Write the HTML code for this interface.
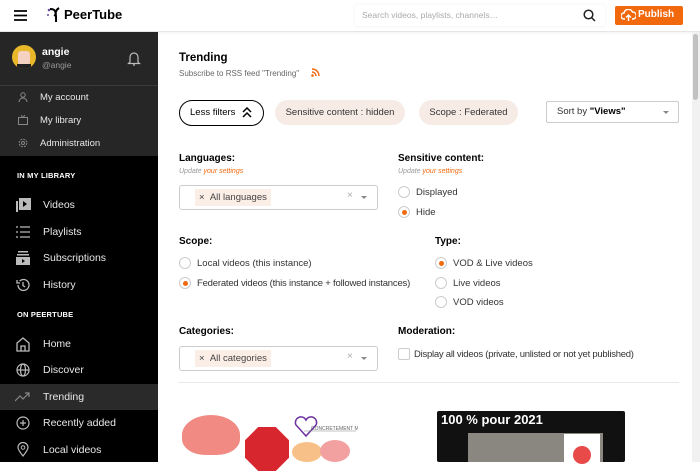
<!DOCTYPE html>
<html><head><meta charset="utf-8"><style>
*{box-sizing:border-box;margin:0;padding:0}
body{width:700px;height:462px;overflow:hidden;font-family:"Liberation Sans",sans-serif;background:#fff;position:relative;color:#000}
.a{position:absolute;white-space:nowrap}
.hdr{left:0;top:0;width:700px;height:32px;background:#fff;border-bottom:1px solid #e6e6e6;box-shadow:0 1px 3px rgba(0,0,0,.06)}
.side{left:0;top:32px;width:158px;height:430px;background:#000}
.top{left:0;top:32px;width:158px;height:124px;background:#262626}
.sm{font-size:9.5px;color:#e8e8e8}
.si{font-size:10.5px;color:#e8e8e8}
.sec{font-size:7.5px;font-weight:bold;color:#fff;letter-spacing:.2px}
.lbl{font-size:10px;font-weight:bold}
.upd{font-size:7px;font-style:italic;color:#999}
.upd span{color:#f1680d}
.opt{font-size:9.5px;color:#333}
.rad{width:12px;height:12px;border:1px solid #ccc;border-radius:50%;background:#fff}
.rad.on::after{content:"";position:absolute;left:2.5px;top:2.5px;width:5px;height:5px;border-radius:50%;background:#f1680d}
.sel{width:199px;height:25px;border:1px solid #ccc;border-radius:3px;background:#fff}
.tag{background:#fbeee6;font-size:9.5px;color:#444;height:17px;line-height:17px;padding:0 4px}
.pill{height:25px;border-radius:13px;background:#f6ebe5;font-size:9.5px;color:#333;line-height:25px;text-align:center}
</style></head><body>
<div class="a hdr"></div>
<svg class="a" style="left:14px;top:10px" width="13" height="11"><path d="M0 1h13M0 5.5h13M0 10h13" stroke="#000" stroke-width="1.8"/></svg>
<svg class="a" style="left:46px;top:7px" width="16" height="16"><circle cx="3" cy="3" r="1.3" fill="#6b4ba0"/><circle cx="2" cy="8" r="1" fill="#6b4ba0"/><path d="M4 2c4 0 5 1 6 5M13 1c-3 2-4 5-3 8v6M8 8l2 1" stroke="#000" stroke-width="2" fill="none"/></svg>
<div class="a" style="left:64px;top:7px;font-size:13px;font-weight:bold">PeerTube</div>
<div class="a" style="left:355px;top:5px;width:250px;height:21px;background:#fff;box-shadow:0 0 3px rgba(0,0,0,.08);border-radius:3px"></div>
<div class="a" style="left:362px;top:10px;font-size:8.5px;color:#aaa">Search videos, playlists, channels…</div>
<svg class="a" style="left:583px;top:9px" width="13" height="13"><circle cx="5.5" cy="5.5" r="4.3" stroke="#222" stroke-width="1.5" fill="none"/><path d="M8.7 8.7L12 12" stroke="#222" stroke-width="1.5"/></svg>
<div class="a" style="left:615px;top:6px;width:68px;height:19px;background:#f1680d;border-radius:2px"></div>
<svg class="a" style="left:621px;top:9px" width="15" height="13"><path d="M4 10H3a3 3 0 0 1 0-6 4.5 4.5 0 0 1 8.5-1 3 3 0 0 1 0.5 7h-1M7.5 12V6M5 8.5l2.5-2.5 2.5 2.5" stroke="#fff" stroke-width="1.4" fill="none"/></svg>
<div class="a" style="left:638px;top:9px;font-size:10px;color:#fff;font-weight:bold">Publish</div>

<div class="a side"></div><div class="a top"></div>
<div class="a" style="left:0;top:85px;width:158px;height:1px;background:#3b3b3b"></div>
<div class="a" style="left:12px;top:45px;width:24px;height:24px;border-radius:50%;background:#e8b82a;overflow:hidden"><div style="position:absolute;left:6px;top:6px;width:12px;height:14px;background:#f4d1c0;border-radius:3px"></div><div style="position:absolute;left:5px;top:19px;width:14px;height:6px;background:#222"></div></div>
<div class="a" style="left:42px;top:46px;font-size:10.5px;font-weight:bold;color:#fff">angie</div>
<div class="a" style="left:42px;top:60px;font-size:8.5px;color:#999">@angie</div>
<svg class="a" style="left:127px;top:51px" width="14" height="16"><path d="M3 11V6a4 4 0 0 1 8 0v5l1.5 1.5h-11zM6 14h2" stroke="#bbb" stroke-width="1.2" fill="none"/></svg>
<svg class="a" style="left:18px;top:92px" width="10" height="10"><circle cx="5" cy="3" r="2.2" stroke="#888" fill="none"/><path d="M1 10a4 4 0 0 1 8 0" stroke="#888" fill="none"/></svg>
<div class="a sm" style="left:40px;top:92px">My account</div>
<svg class="a" style="left:18px;top:115px" width="10" height="10"><rect x="0.5" y="2.5" width="9" height="7" stroke="#888" fill="none"/><path d="M3 0l2 2.5L7 0" stroke="#888" fill="none"/></svg>
<div class="a sm" style="left:40px;top:115px">My library</div>
<svg class="a" style="left:18px;top:138px" width="10" height="10"><circle cx="5" cy="5" r="3.8" stroke="#888" stroke-dasharray="2 1" fill="none"/><circle cx="5" cy="5" r="1.5" stroke="#888" fill="none"/></svg>
<div class="a sm" style="left:40px;top:138px">Administration</div>

<div class="a sec" style="left:17px;top:171px">IN MY LIBRARY</div>
<svg class="a" style="left:16px;top:198px" width="15" height="14"><rect x="0" y="3" width="2" height="11" fill="#bbb"/><rect x="3" y="0" width="12" height="12" fill="#bbb"/><path d="M7 3v6l4-3z" fill="#000"/></svg>
<div class="a si" style="left:43px;top:199px">Videos</div>
<svg class="a" style="left:16px;top:226px" width="14" height="12"><path d="M0 1h2M4 1h10M0 6h2M4 6h10M0 11h2M4 11h10" stroke="#bbb" stroke-width="1.3"/></svg>
<div class="a si" style="left:43px;top:226px">Playlists</div>
<svg class="a" style="left:16px;top:251px" width="14" height="14"><rect x="2" y="0" width="10" height="1.5" fill="#bbb"/><rect x="1" y="3" width="12" height="1.5" fill="#bbb"/><rect x="0" y="6" width="14" height="8" fill="#bbb"/><path d="M6 8v4l3-2z" fill="#000"/></svg>
<div class="a si" style="left:43px;top:252px">Subscriptions</div>
<svg class="a" style="left:16px;top:278px" width="14" height="14"><path d="M2 7a5.5 5.5 0 1 0 1.6-3.9M1 2v3h3M7 4v3.5l2 1.5" stroke="#bbb" stroke-width="1.3" fill="none"/></svg>
<div class="a si" style="left:43px;top:279px">History</div>
<div class="a sec" style="left:17px;top:310px">ON PEERTUBE</div>
<svg class="a" style="left:16px;top:337px" width="14" height="15"><path d="M1 14V6l6-5 6 5v8zM5 14V9h4v5" stroke="#bbb" stroke-width="1.3" fill="none"/></svg>
<div class="a si" style="left:43px;top:338px">Home</div>
<svg class="a" style="left:16px;top:363px" width="14" height="14"><circle cx="7" cy="7" r="6" stroke="#bbb" stroke-width="1.2" fill="none"/><ellipse cx="7" cy="7" rx="2.5" ry="6" stroke="#bbb" stroke-width="1.2" fill="none"/><path d="M1 7h12" stroke="#bbb" stroke-width="1.2"/></svg>
<div class="a si" style="left:43px;top:364px">Discover</div>
<div class="a" style="left:0;top:384px;width:158px;height:26px;background:#2a2a2a"></div>
<svg class="a" style="left:15px;top:392px" width="16" height="10"><path d="M0 9l5-5 3 3 6-6M10 1h4v4" stroke="#888" stroke-width="1.2" fill="none"/></svg>
<div class="a si" style="left:43px;top:391px">Trending</div>
<svg class="a" style="left:16px;top:416px" width="14" height="14"><circle cx="7" cy="7" r="6" stroke="#bbb" stroke-width="1.2" fill="none"/><path d="M7 4v6M4 7h6" stroke="#bbb" stroke-width="1.2"/></svg>
<div class="a si" style="left:43px;top:417px">Recently added</div>
<svg class="a" style="left:17px;top:442px" width="12" height="15"><path d="M6 14C2 9 1 7 1 5.5a5 5 0 0 1 10 0C11 7 10 9 6 14z" stroke="#bbb" stroke-width="1.2" fill="none"/><circle cx="6" cy="5.5" r="1.8" stroke="#bbb" fill="none"/></svg>
<div class="a si" style="left:43px;top:444px">Local videos</div>

<div class="a" style="left:179px;top:52px;font-size:11.5px;font-weight:bold">Trending</div>
<div class="a" style="left:179px;top:69px;font-size:8px;color:#666">Subscribe to RSS feed "Trending"</div>
<svg class="a" style="left:311px;top:68px" width="9" height="9"><circle cx="1.5" cy="7.5" r="1.3" fill="#f1680d"/><path d="M1 4a4 4 0 0 1 4 4M1 1a7 7 0 0 1 7 7" stroke="#f1680d" stroke-width="1.4" fill="none"/></svg>
<div class="a" style="left:179px;top:100px;width:85px;height:26px;border:1.5px solid #000;border-radius:13px"></div>
<div class="a" style="left:190px;top:107px;font-size:9.5px">Less filters</div>
<svg class="a" style="left:242px;top:107px" width="10" height="11"><path d="M1 5l4-4 4 4M1 10l4-4 4 4" stroke="#000" stroke-width="1.5" fill="none"/></svg>
<div class="a pill" style="left:275px;top:100px;width:130px">Sensitive content : hidden</div>
<div class="a pill" style="left:419px;top:100px;width:99px">Scope : Federated</div>
<div class="a" style="left:546px;top:101px;width:133px;height:22px;border:1px solid #ccc;border-radius:2px"></div>
<div class="a" style="left:557px;top:106px;font-size:9.5px;color:#333">Sort by <b style="color:#000">"Views"</b></div>
<div class="a" style="left:663px;top:111px;border:3px solid transparent;border-top:3px solid #888"></div>

<div class="a lbl" style="left:179px;top:153px">Languages:</div>
<div class="a upd" style="left:179px;top:168px">Update <span>your settings</span></div>
<div class="a sel" style="left:179px;top:185px"></div>
<div class="a tag" style="left:195px;top:189px">× &nbsp;All languages</div>
<div class="a" style="left:347px;top:190px;font-size:10px;color:#aaa">×</div>
<div class="a" style="left:361px;top:196px;border:3px solid transparent;border-top:3px solid #888"></div>

<div class="a lbl" style="left:398px;top:153px">Sensitive content:</div>
<div class="a upd" style="left:398px;top:168px">Update <span>your settings</span></div>
<div class="a rad" style="left:398px;top:186px"></div><div class="a opt" style="left:416px;top:187px">Displayed</div>
<div class="a rad on" style="left:398px;top:206px"></div><div class="a opt" style="left:416px;top:207px">Hide</div>

<div class="a lbl" style="left:179px;top:236px">Scope:</div>
<div class="a rad" style="left:179px;top:257px"></div><div class="a opt" style="left:197px;top:258px">Local videos (this instance)</div>
<div class="a rad on" style="left:179px;top:277px"></div><div class="a opt" style="left:197px;top:278px;letter-spacing:-.2px">Federated videos (this instance + followed instances)</div>

<div class="a lbl" style="left:435px;top:236px">Type:</div>
<div class="a rad on" style="left:435px;top:257px"></div><div class="a opt" style="left:453px;top:258px">VOD &amp; Live videos</div>
<div class="a rad" style="left:435px;top:277px"></div><div class="a opt" style="left:453px;top:278px">Live videos</div>
<div class="a rad" style="left:435px;top:296px"></div><div class="a opt" style="left:453px;top:297px">VOD videos</div>

<div class="a lbl" style="left:179px;top:326px">Categories:</div>
<div class="a sel" style="left:179px;top:346px"></div>
<div class="a tag" style="left:195px;top:350px">× &nbsp;All categories</div>
<div class="a" style="left:347px;top:351px;font-size:10px;color:#aaa">×</div>
<div class="a" style="left:361px;top:357px;border:3px solid transparent;border-top:3px solid #888"></div>
<div class="a lbl" style="left:398px;top:326px">Moderation:</div>
<div class="a" style="left:398px;top:348px;width:12px;height:12px;border:1px solid #ccc;border-radius:2px"></div>
<div class="a opt" style="left:414px;top:349px;letter-spacing:-.25px">Display all videos (private, unlisted or not yet published)</div>

<div class="a" style="left:178px;top:382px;width:501px;height:1px;background:#e8e8e8"></div>

<div class="a" style="left:182px;top:415px;width:58px;height:40px;border-radius:50% 50% 40% 40%;background:#f08a82"></div>
<div class="a" style="left:245px;top:427px;width:44px;height:44px;background:#d8262e;clip-path:polygon(30% 0,70% 0,100% 30%,100% 70%,70% 100%,30% 100%,0 70%,0 30%)"></div>
<svg class="a" style="left:293px;top:414px" width="65" height="24"><path d="M13 22L3 11a5 5 0 0 1 10-5 5 5 0 0 1 10 5z" stroke="#6b2fa0" stroke-width="1.5" fill="none"/><path d="M11 17h52" stroke="#888" stroke-width=".6"/><text x="18" y="16" font-size="5" fill="#666" font-family="Liberation Sans">CONCRETEMENT MOI</text></svg>
<div class="a" style="left:292px;top:442px;width:30px;height:20px;border-radius:50%;background:#f7c088"></div>
<div class="a" style="left:320px;top:440px;width:30px;height:22px;border-radius:50%;background:#f3a0a0"></div>

<div class="a" style="left:437px;top:411px;width:188px;height:51px;background:#111;border-radius:2px"></div>
<div class="a" style="left:441px;top:412px;font-size:13px;font-weight:bold;color:#fff">100 % pour 2021</div>
<div class="a" style="left:468px;top:433px;width:135px;height:29px;background:#8a8680"></div>
<div class="a" style="left:564px;top:434px;width:36px;height:28px;background:#fff"></div>
<div class="a" style="left:573px;top:446px;width:18px;height:18px;border-radius:50%;background:#e84a4a"></div>

<div class="a" style="left:692px;top:32px;width:8px;height:430px;background:#f1f1f1"></div>
<div class="a" style="left:693px;top:34px;width:5px;height:66px;background:#c1c1c1;border-radius:3px"></div>
</body></html>
